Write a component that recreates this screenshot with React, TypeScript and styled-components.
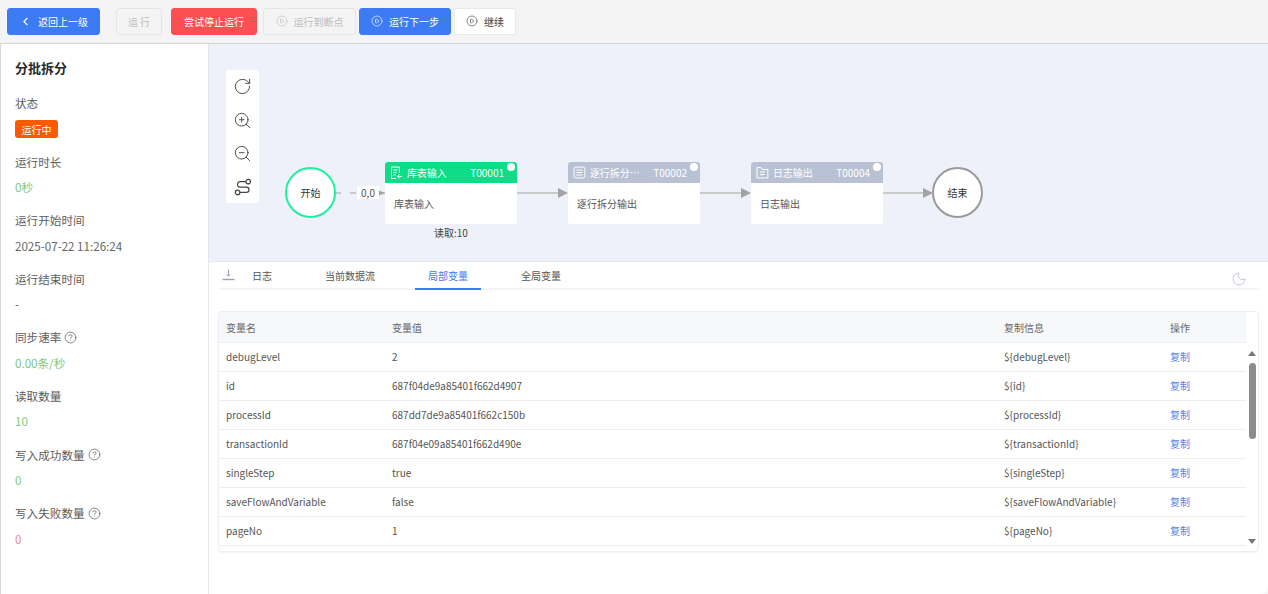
import React from "react";
import styled, { createGlobalStyle } from "styled-components";
import {
  ChevronLeft,
  CirclePlay,
  CircleHelp,
  Moon,
  RotateCw,
  ZoomIn,
  ZoomOut,
} from "lucide-react";

const FONT = `"Noto Sans CJK SC", "Noto Sans", sans-serif`;

const GlobalStyle = createGlobalStyle`
  html, body {
    margin: 0;
    padding: 0;
    background: #f4f4f4;
    font-family: ${FONT};
    color: #444;
  }
  * { box-sizing: border-box; }
`;

const ROWS = [
  ["debugLevel", "2"],
  ["id", "687f04de9a85401f662d4907"],
  ["processId", "687dd7de9a85401f662c150b"],
  ["transactionId", "687f04e09a85401f662d490e"],
  ["singleStep", "true"],
  ["saveFlowAndVariable", "false"],
  ["pageNo", "1"],
];

const TableInputIcon = () => (
  <svg width="13" height="14" viewBox="0 0 13 14" fill="none" stroke="#fff" strokeWidth="1">
    <path d="M6 12.5H1.5V1h8v6" />
    <path d="M3.5 4h4M3.5 6.5h3M3.5 9h2" />
    <path d="M12 10.5H7.5M9.5 8.5l-2 2 2 2" />
  </svg>
);

const SplitIcon = () => (
  <svg width="13" height="13" viewBox="0 0 13 13" fill="none" stroke="#fff" strokeWidth="1">
    <rect x="1" y="1" width="11" height="11" rx="2" />
    <path d="M3.5 4h6M3.5 6.5h6M3.5 9h6" />
  </svg>
);

const LogIcon = () => (
  <svg width="13" height="13" viewBox="0 0 13 13" fill="none" stroke="#fff" strokeWidth="1">
    <path d="M1 12V1.5h4l1.5 2H12V12z" />
    <path d="M4 6h4.5l-1-1M9 8.5H4.5l1 1" />
  </svg>
);

const RouteIcon = () => (
  <svg width="18" height="18" viewBox="0 0 18 18" fill="none" stroke="#444" strokeWidth="1.2">
    <circle cx="14.2" cy="3.6" r="2.3" />
    <circle cx="3.6" cy="14.4" r="2.3" />
    <path d="M11.9 3.6H5.6a2.9 2.9 0 0 0 0 5.6h6.8a2.6 2.6 0 0 1 0 5.2H5.9" />
  </svg>
);

const DownloadIcon = () => (
  <svg width="13" height="13" viewBox="0 0 13 13" fill="none" stroke="#9aa0ad" strokeWidth="1">
    <path d="M6.5 1.5v6.5M4.5 6.2l2 2 2-2" />
    <path d="M0.5 11.5h12" strokeWidth="1.4" />
  </svg>
);

const Edges = () => (
  <EdgeLayer width="1059" height="218" viewBox="0 0 1059 218">
    <g stroke="#bdbdbd" strokeWidth="1.6" fill="none">
      <path d="M126 149h50" strokeDasharray="6 9" />
      <path d="M308 149h42" />
      <path d="M491 149h42" />
      <path d="M674 149h40" />
    </g>
    <g fill="#a3a3a3">
      <path d="M170 146.5l6 2.5-6 2.5z" />
      <path d="M349 144l10 5-10 5z" />
      <path d="M532 144l10 5-10 5z" />
      <path d="M714 144l10 5-10 5z" />
    </g>
  </EdgeLayer>
);

const FlowNode: React.FC<{
  left: number;
  title: string;
  code: string;
  body: string;
  active?: boolean;
  icon: React.ReactNode;
}> = ({ left, title, code, body, active, icon }) => (
  <NodeCard $left={left}>
    <NodeHeader $active={active}>
      {icon}
      <NodeTitle>{title}</NodeTitle>
      <NodeCode>{code}</NodeCode>
      <NodeDot />
    </NodeHeader>
    <NodeBody>{body}</NodeBody>
  </NodeCard>
);

const Hint = () => <CircleHelp size={13} strokeWidth={1.3} color="#555" />;

export default function App() {
  return (
    <Page>
      <GlobalStyle />
      <TopBar>
        <Button $variant="primary" $width={93} $after={16}>
          <ChevronLeft size={13} />
          <span>返回上一级</span>
        </Button>
        <Button $variant="disabled" $width={46} $after={9}>
          <span>运 行</span>
        </Button>
        <Button $variant="danger" $width={86} $after={6}>
          <span>尝试停止运行</span>
        </Button>
        <Button $variant="disabled" $width={93} $after={3}>
          <CirclePlay size={12} strokeWidth={1.3} />
          <span>运行到断点</span>
        </Button>
        <Button $variant="primary" $width={92} $after={3}>
          <CirclePlay size={12} strokeWidth={1.3} />
          <span>运行下一步</span>
        </Button>
        <Button $variant="plain" $width={62} $after={0}>
          <CirclePlay size={12} strokeWidth={1.3} />
          <span>继续</span>
        </Button>
      </TopBar>
      <Content>
        <Sidebar>
          <SideTitle>分批拆分</SideTitle>
          <Stat>
            <StatLabel>状态</StatLabel>
            <StatValue>
              <Badge>运行中</Badge>
            </StatValue>
          </Stat>
          <Stat>
            <StatLabel>运行时长</StatLabel>
            <StatValue $color="#7fc77a">0秒</StatValue>
          </Stat>
          <Stat>
            <StatLabel>运行开始时间</StatLabel>
            <StatValue>2025-07-22 11:26:24</StatValue>
          </Stat>
          <Stat>
            <StatLabel>运行结束时间</StatLabel>
            <StatValue>-</StatValue>
          </Stat>
          <Stat>
            <StatLabel>
              同步速率 <Hint />
            </StatLabel>
            <StatValue $color="#7fc77a">0.00条/秒</StatValue>
          </Stat>
          <Stat>
            <StatLabel>读取数量</StatLabel>
            <StatValue $color="#7fc77a">10</StatValue>
          </Stat>
          <Stat>
            <StatLabel>
              写入成功数量 <Hint />
            </StatLabel>
            <StatValue $color="#7fc77a">0</StatValue>
          </Stat>
          <Stat>
            <StatLabel>
              写入失败数量 <Hint />
            </StatLabel>
            <StatValue $color="#e58a8a">0</StatValue>
          </Stat>
        </Sidebar>
        <Main>
          <Canvas>
            <Edges />
            <CanvasTools>
              <RotateCw size={19} strokeWidth={1.2} color="#444" />
              <ZoomIn size={19} strokeWidth={1.2} color="#444" />
              <ZoomOut size={19} strokeWidth={1.2} color="#444" />
              <RouteIcon />
            </CanvasTools>
            <Circle $left={76} $color="#1ff0a0">开始</Circle>
            <EdgeLabel>0,0</EdgeLabel>
            <FlowNode left={176} active title="库表输入" code="T00001" body="库表输入" icon={<TableInputIcon />} />
            <ReadCount>读取:10</ReadCount>
            <FlowNode left={359} title="逐行拆分…" code="T00002" body="逐行拆分输出" icon={<SplitIcon />} />
            <FlowNode left={542} title="日志输出" code="T00004" body="日志输出" icon={<LogIcon />} />
            <Circle $left={723} $color="#9a9a9a">结束</Circle>
          </Canvas>
          <Lower>
            <TabBar>
              <TabIcon>
                <DownloadIcon />
              </TabIcon>
              <Tab>日志</Tab>
              <Tab>当前数据流</Tab>
              <Tab $active>局部变量</Tab>
              <Tab>全局变量</Tab>
              <MoonSlot>
                <Moon size={16} strokeWidth={1} color="#a9afc4" />
              </MoonSlot>
            </TabBar>
            <TableCard>
              <TableMain>
                <HeadRow>
                  <HeadCell>变量名</HeadCell>
                  <HeadCell>变量值</HeadCell>
                  <HeadCell>复制信息</HeadCell>
                  <HeadCell>操作</HeadCell>
                </HeadRow>
                {ROWS.map(([name, value]) => (
                  <BodyRow key={name}>
                    <Cell>{name}</Cell>
                    <Cell>{value}</Cell>
                    <Cell>{"${" + name + "}"}</Cell>
                    <CopyLink>复制</CopyLink>
                  </BodyRow>
                ))}
              </TableMain>
              <ScrollTrack>
                <ScrollArrow />
                <ScrollThumb />
                <ScrollArrow $down />
              </ScrollTrack>
            </TableCard>
          </Lower>
        </Main>
      </Content>
    </Page>
  );
}

const Page = styled.div`
  width: 1268px;
  height: 594px;
  overflow: hidden;
  display: flex;
  flex-direction: column;
  font-family: ${FONT};
`;

const TopBar = styled.div`
  height: 43px;
  flex: none;
  display: flex;
  align-items: center;
  padding: 0 0 1px 7px;
  background: #f4f4f4;
`;

const BUTTON_THEMES = {
  primary: "background:#3d7bf5;border-color:#3d7bf5;color:#fff;",
  danger: "background:#fb4f54;border-color:#fb4f54;color:#fff;",
  disabled: "background:#f4f4f4;border-color:#e6e6e6;color:#bcbcbc;",
  plain: "background:#fff;border-color:#e8e8e8;color:#444;",
};

const Button = styled.div<{
  $variant: keyof typeof BUTTON_THEMES;
  $width: number;
  $after: number;
}>`
  width: ${(p) => p.$width}px;
  height: 27px;
  margin-right: ${(p) => p.$after}px;
  flex: none;
  display: flex;
  align-items: center;
  justify-content: center;
  gap: 6px;
  border: 1px solid;
  border-radius: 3px;
  font-size: 10px;
  ${(p) => BUTTON_THEMES[p.$variant]}
`;

const Content = styled.div`
  flex: 1;
  min-height: 0;
  display: flex;
  border-top: 1px solid #d4d4d4;
`;

const Sidebar = styled.aside`
  width: 209px;
  flex: none;
  background: #fff;
  border-right: 1px solid #e4e6ec;
  border-left: 1px solid #d8d8d8;
  padding: 14px 14px 0;
`;

const SideTitle = styled.div`
  font-size: 13px;
  line-height: 20px;
  font-weight: 700;
  color: #2b2b2b;
  margin-bottom: 17px;
`;

const Stat = styled.div`
  height: 58.6px;
`;

const StatLabel = styled.div`
  height: 16px;
  display: flex;
  align-items: center;
  gap: 3px;
  font-size: 11.6px;
  line-height: 16px;
  color: #5c5c5c;
`;

const StatValue = styled.div<{ $color?: string }>`
  margin-top: 9.5px;
  height: 17px;
  display: flex;
  align-items: center;
  font-size: 11.6px;
  line-height: 17px;
  color: ${(p) => p.$color || "#666"};
`;

const Badge = styled.span`
  width: 43px;
  height: 18px;
  display: flex;
  align-items: center;
  justify-content: center;
  border-radius: 3px;
  background: #fd5a00;
  color: #fff;
  font-size: 10px;
`;

const Main = styled.main`
  flex: 1;
  min-width: 0;
  display: flex;
  flex-direction: column;
`;

const Canvas = styled.div`
  position: relative;
  height: 218px;
  flex: none;
  background: #eef1f9;
  border-bottom: 1px solid #e6e9f2;
`;

const EdgeLayer = styled.svg`
  position: absolute;
  left: 0;
  top: 0;
`;

const CanvasTools = styled.div`
  position: absolute;
  left: 17px;
  top: 26px;
  width: 33px;
  height: 133px;
  padding: 7px 0;
  display: flex;
  flex-direction: column;
  align-items: center;
  justify-content: space-between;
  background: #fff;
  border-radius: 3px;
`;

const Circle = styled.div<{ $left: number; $color: string }>`
  position: absolute;
  left: ${(p) => p.$left}px;
  top: 123px;
  width: 51px;
  height: 51px;
  display: flex;
  align-items: center;
  justify-content: center;
  border-radius: 50%;
  border: 2px solid ${(p) => p.$color};
  background: #fff;
  font-size: 10px;
  color: #333;
`;

const EdgeLabel = styled.div`
  position: absolute;
  left: 148px;
  top: 142px;
  width: 22px;
  height: 13px;
  background: #fff;
  font-size: 10px;
  line-height: 13px;
  text-align: center;
  color: #555;
`;

const ReadCount = styled.div`
  position: absolute;
  left: 225px;
  top: 182px;
  font-size: 10px;
  line-height: 14px;
  color: #444;
`;

const NodeCard = styled.div<{ $left: number }>`
  position: absolute;
  left: ${(p) => p.$left}px;
  top: 118px;
  width: 132px;
  height: 62px;
  background: #fff;
  border-radius: 3px;
  overflow: hidden;
`;

const NodeHeader = styled.div<{ $active?: boolean }>`
  position: relative;
  height: 21px;
  display: flex;
  align-items: center;
  padding-left: 5px;
  background: ${(p) => (p.$active ? "#0fdc86" : "#b9c2d4")};
  color: #fff;
  font-size: 10px;
`;

const NodeTitle = styled.span`
  margin-left: 4px;
  width: 64px;
  white-space: nowrap;
`;

const NodeCode = styled.span`
  margin-left: auto;
  margin-right: 13px;
`;

const NodeDot = styled.i`
  position: absolute;
  right: 2px;
  top: 1px;
  width: 8px;
  height: 8px;
  border-radius: 50%;
  background: #fff;
`;

const NodeBody = styled.div`
  padding: 14px 9px 0;
  font-size: 10px;
  line-height: 14px;
  color: #555;
`;

const Lower = styled.div`
  flex: 1;
  min-height: 0;
  background: #fff;
  border-bottom-right-radius: 6px;
  padding: 0 9px 0 10px;
`;

const TabBar = styled.div`
  height: 28px;
  display: flex;
  gap: 27px;
  border-bottom: 2px solid #f4f5f8;
  margin-bottom: 21px;
`;

const TabIcon = styled.div`
  width: 17px;
  margin-left: 3px;
  margin-right: -27px;
  display: flex;
  align-items: center;
  padding-bottom: 1px;
`;

const Tab = styled.div<{ $active?: boolean }>`
  height: 28px;
  padding: 0 13px;
  display: flex;
  align-items: center;
  font-size: 10px;
  color: ${(p) => (p.$active ? "#3d7bf5" : "#555")};
  border-bottom: 2px solid ${(p) => (p.$active ? "#3d7bf5" : "transparent")};
`;

const MoonSlot = styled.div`
  margin-left: auto;
  margin-right: 12px;
  display: flex;
  align-items: center;
  padding-top: 7px;
`;

const TableCard = styled.div`
  width: 1041px;
  height: 241px;
  margin-left: -1px;
  display: flex;
  border: 1px solid #eeeff2;
  border-radius: 4px;
  overflow: hidden;
  box-shadow: 0 1px 1px #f2f2f2;
`;

const TableMain = styled.div`
  width: 1027px;
  flex: none;
`;

const COLUMNS = "166px 612px 166px 83px";

const HeadRow = styled.div`
  display: grid;
  grid-template-columns: ${COLUMNS};
  height: 31px;
  background: #f7f8fa;
  border-bottom: 1px solid #eceef2;
`;

const HeadCell = styled.div`
  padding-left: 7px;
  display: flex;
  align-items: center;
  font-size: 10px;
  color: #666;
`;

const BodyRow = styled.div`
  display: grid;
  grid-template-columns: ${COLUMNS};
  height: 29px;
  border-bottom: 1px solid #eceef2;
`;

const Cell = styled.div`
  padding: 0 0 1px 7px;
  display: flex;
  align-items: center;
  font-size: 10px;
  color: #555;
  white-space: nowrap;
`;

const CopyLink = styled(Cell)`
  color: #4d82f0;
`;

const ScrollTrack = styled.div`
  flex: 1;
  padding-top: 39px;
  padding-bottom: 7px;
  display: flex;
  flex-direction: column;
  align-items: center;
`;

const ScrollArrow = styled.i<{ $down?: boolean }>`
  width: 0;
  height: 0;
  border-left: 4px solid transparent;
  border-right: 4px solid transparent;
  ${(p) =>
    p.$down
      ? "border-top: 5px solid #777; margin-top: auto;"
      : "border-bottom: 5px solid #777;"}
`;

const ScrollThumb = styled.div`
  width: 7px;
  height: 76px;
  margin-top: 7px;
  border-radius: 4px;
  background: #8c8c8c;
`;
